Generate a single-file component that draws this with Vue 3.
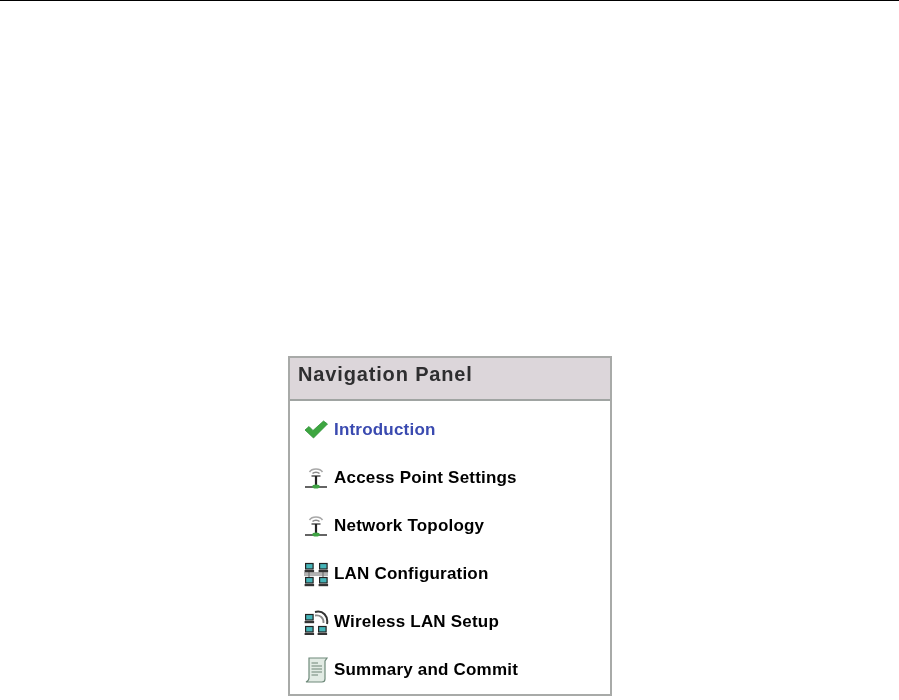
<template>
  <div class="page">
    <div class="rule"></div>
    <section class="panel">
      <h2 class="panel-title">Navigation Panel</h2>
      <ul class="steps">
        <li v-for="step in steps" :key="step.label" class="step" :class="{ current: step.current }">
          <span class="icon">
            <svg v-if="step.icon === 'check'" width="26" height="28" viewBox="0 0 26 28">
              <path d="M2 15 L6 11.5 L10 15.5 L20.5 6 L24.5 9 L10.5 23 Z" fill="#3da640" stroke="#2f9038" stroke-width="0.8" stroke-linejoin="round" />
            </svg>
            <svg v-else-if="step.icon === 'ap'" width="26" height="28" viewBox="0 0 26 28">
              <path d="M6.5 9 C9 5 17 5 19.5 9" fill="none" stroke="#a8a8a8" stroke-width="1.6" />
              <path d="M9.5 10.5 C11 8.8 15 8.8 16.5 10.5" fill="none" stroke="#8a8a8a" stroke-width="1.4" />
              <path d="M8.5 13 H17.5" stroke="#555" stroke-width="1.5" />
              <path d="M13 13 V23" stroke="#222" stroke-width="2.2" />
              <path d="M2 24 H24" stroke="#222" stroke-width="1.4" />
              <ellipse cx="13" cy="23.5" rx="3.8" ry="2" fill="#3fa344" />
            </svg>
            <svg v-else-if="step.icon === 'lan'" width="26" height="28" viewBox="0 0 26 28">
              <path d="M1 14 H25 M1 16 H25 M6 11 V19 M20 11 V19" stroke="#666" stroke-width="1" />
              <g v-for="pc in lanPcs" :key="pc.x + '-' + pc.y" :transform="`translate(${pc.x} ${pc.y})`">
                <rect x="0.6" y="0.5" width="7.5" height="5.5" fill="#45b4b8" stroke="#222" stroke-width="1.2" />
                <rect x="-0.4" y="7" width="9.5" height="2.2" fill="#333" />
              </g>
            </svg>
            <svg v-else-if="step.icon === 'wlan'" width="26" height="28" viewBox="0 0 26 28">
              <g v-for="pc in wlanPcs" :key="pc.x + '-' + pc.y" :transform="`translate(${pc.x} ${pc.y})`">
                <rect x="0.6" y="0.5" width="7.5" height="5.5" fill="#45b4b8" stroke="#222" stroke-width="1.2" />
                <rect x="-0.4" y="7" width="9.5" height="2.2" fill="#333" />
              </g>
              <path d="M12 5 C20 3 25.5 9 24 17" fill="none" stroke="#333" stroke-width="2" />
              <path d="M12 8.5 C17 7.5 21 11 20.5 16" fill="none" stroke="#8a8a8a" stroke-width="1.8" />
            </svg>
            <svg v-else width="26" height="28" viewBox="0 0 26 28">
              <path d="M6 3 H24 L22 6 V24 Q22 27 19 27 H3 Q6 25.5 6 23 Z" fill="#e2ebe4" stroke="#6f8a7b" stroke-width="1.2" />
              <path d="M8.5 8 H15 M8.5 11 H19 M8.5 14 H19 M8.5 17 H19 M8.5 20 H15" stroke="#95a89b" stroke-width="1.5" />
            </svg>
          </span>
          <span class="label">{{ step.label }}</span>
        </li>
      </ul>
    </section>
  </div>
</template>

<script setup>
const steps = [
  { label: 'Introduction', icon: 'check', current: true },
  { label: 'Access Point Settings', icon: 'ap' },
  { label: 'Network Topology', icon: 'ap' },
  { label: 'LAN Configuration', icon: 'lan' },
  { label: 'Wireless LAN Setup', icon: 'wlan' },
  { label: 'Summary and Commit', icon: 'doc' }
]

const lanPcs = [
  { x: 2, y: 4 },
  { x: 16, y: 4 },
  { x: 2, y: 18 },
  { x: 16, y: 18 }
]

const wlanPcs = [
  { x: 2, y: 7 },
  { x: 2, y: 19 },
  { x: 15, y: 19 }
]
</script>

<style>
html, body {
  background: #fff;
}
</style>

<style scoped>
.page {
  height: 700px;
  font-family: "Liberation Sans", Arial, sans-serif;
  overflow: hidden;
}

.rule {
  height: 1px;
  background: #000;
}

.panel {
  width: 320px;
  margin: 355px 0 0 288px;
  border: 2px solid #a8aaa8;
  background: #fff;
  filter: blur(0.4px);
}

.panel-title {
  margin: 0;
  height: 41px;
  padding-left: 8px;
  line-height: 32px;
  font-size: 20px;
  font-weight: bold;
  letter-spacing: 0.85px;
  color: #2e2e30;
  background: #dcd6da;
  border-bottom: 2px solid #a0a4a2;
}

.steps {
  list-style: none;
  margin: 0;
  padding: 4px 0 1px;
}

.step {
  display: flex;
  align-items: center;
  height: 48px;
  padding-left: 13px;
  gap: 5px;
  font-size: 17px;
  font-weight: bold;
  letter-spacing: 0.2px;
  color: #000;
}

.step.current {
  color: #3a4ab0;
}

.icon {
  display: flex;
  width: 26px;
  height: 28px;
}

.label {
  line-height: 1;
}
</style>
